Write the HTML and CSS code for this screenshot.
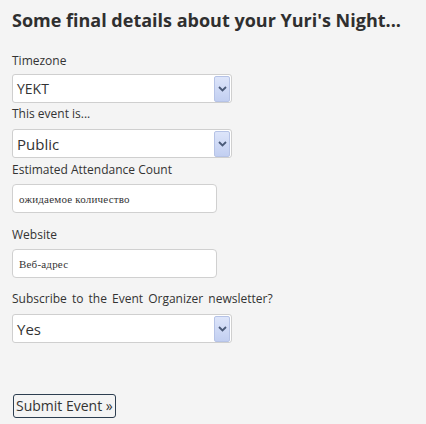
FILE: index.html
```html
<!DOCTYPE html>
<html>
<head>
<meta charset="utf-8">
<link rel="stylesheet" href="styles.css">
</head>
<body>
<div class="page">
  <h1 class="title">Some final details about your Yuri's Night...</h1>
  <form class="form">
    <label class="label l1">Timezone</label>
    <div class="select"><span class="value">YEKT</span><span class="arrow"><svg width="9" height="6" viewBox="0 0 9 6"><path d="M1 1 L4.5 4.5 L8 1" fill="none" stroke="#4a5a78" stroke-width="1.8"/></svg></span></div>
    <label class="label l2">This event is...</label>
    <div class="select"><span class="value big">Public</span><span class="arrow"><svg width="9" height="6" viewBox="0 0 9 6"><path d="M1 1 L4.5 4.5 L8 1" fill="none" stroke="#4a5a78" stroke-width="1.8"/></svg></span></div>
    <label class="label l3">Estimated Attendance Count</label>
    <div class="input"><span class="ph">ожидаемое количество</span></div>
    <label class="label l4">Website</label>
    <div class="input"><span class="ph">Веб-адрес</span></div>
    <label class="label l5">Subscribe to the Event Organizer newsletter?</label>
    <div class="select"><span class="value big">Yes</span><span class="arrow"><svg width="9" height="6" viewBox="0 0 9 6"><path d="M1 1 L4.5 4.5 L8 1" fill="none" stroke="#4a5a78" stroke-width="1.8"/></svg></span></div>
    <div class="actions"><button type="button" class="submit">Submit Event »</button></div>
  </form>
</div>
</body>
</html>
```
FILE: styles.css
```css
html, body {
  margin: 0;
  padding: 0;
  background: #f4f4f4;
}
.page {
  padding: 8px 12px 0 12px;
  font-family: "Open Sans", "DejaVu Sans", sans-serif;
  color: #333;
}
.title {
  margin: 0;
  font-size: 18px;
  font-weight: 700;
  line-height: 24px;
  color: #2f2f2f;
  white-space: nowrap;
}
.form {
  display: flex;
  flex-direction: column;
  align-items: flex-start;
}
.label {
  font-size: 12px;
  line-height: 16px;
  color: #333;
}
.l1 { margin: 21px 0 5px; }
.l2 { margin: 3px 0 7px; }
.l3 { margin: 4px 0 6px; }
.l4 { margin: 14px 0 6px; }
.l5 { margin: 13px 0 7px; word-spacing: 2px; }
.select {
  box-sizing: border-box;
  width: 220px;
  height: 29px;
  border: 1px solid #cfcfcf;
  border-radius: 3px;
  background: #fff;
  display: flex;
  align-items: center;
  justify-content: space-between;
  padding: 0 1px 0 4px;
}
.value {
  font-size: 14px;
  color: #333;
}
.value.big {
  font-size: 15px;
}
.arrow {
  box-sizing: border-box;
  width: 16px;
  height: 26px;
  border: 1px solid #b6c3e6;
  border-radius: 2px;
  background: linear-gradient(to bottom, #dde5fa 0%, #c2cff1 100%);
  display: flex;
  align-items: center;
  justify-content: center;
}
.input {
  box-sizing: border-box;
  width: 205px;
  height: 29px;
  border: 1px solid #d0d0d0;
  border-radius: 4px;
  background: #fff;
  display: flex;
  align-items: center;
  padding: 0 6px;
}
.ph {
  font-family: "Liberation Serif", "DejaVu Serif", serif;
  font-size: 11px;
  letter-spacing: 0.2px;
  color: #333;
}
.actions {
  margin-top: 51px;
}
.submit {
  box-sizing: border-box;
  margin: 0 0 0 1px;
  height: 24px;
  padding: 0 2px;
  border: 1px solid #2d3e50;
  border-radius: 3px;
  background: #f4f4f4;
  font-family: "Open Sans", "DejaVu Sans", sans-serif;
  font-size: 14px;
  color: #333;
  line-height: 22px;
}
```
